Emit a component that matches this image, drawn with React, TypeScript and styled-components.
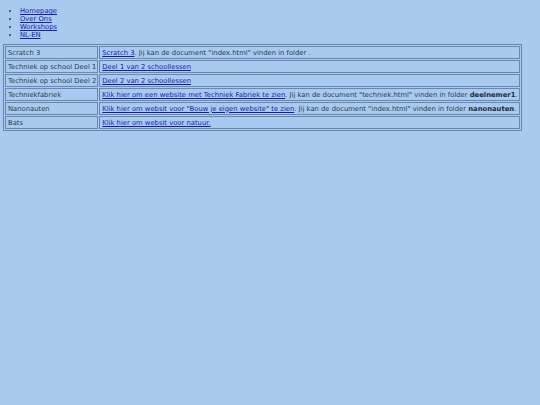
import React from 'react';
import styled, { createGlobalStyle } from 'styled-components';

const GlobalStyle = createGlobalStyle`
  html, body {
    margin: 0;
    background: #a9caf0;
  }
  body {
    padding: 4px 4px 4px 3px;
    font-family: "DejaVu Sans", Verdana, sans-serif;
    font-size: 6.8px;
    color: #2a3a4a;
  }
`;

const Menu = styled.ul`
  margin: 3px 0 5px 0;
  padding-left: 17px;
  list-style: disc;
  li {
    line-height: 8px;
  }
  a {
    color: #1a1aa6;
  }
`;

const Table = styled.table`
  border: 1px solid #6a88ad;
  border-spacing: 1px;
  width: 518px;
`;

const Cell = styled.td<{ $label?: boolean }>`
  border: 1px solid #6a88ad;
  padding: 0 1px 0 2px;
  height: 11px;
  white-space: nowrap;
  width: ${(p) => (p.$label ? '1%' : 'auto')};
  a {
    color: #1a1aa6;
  }
  b {
    color: #1e2a38;
  }
`;

const rows: { label: string; content: React.ReactNode }[] = [
  {
    label: 'Scratch 3',
    content: (
      <>
        <a href="#">Scratch 3</a>. Jij kan de document "index.html" vinden in folder .
      </>
    ),
  },
  { label: 'Techniek op school Deel 1', content: <a href="#">Deel 1 van 2 schoollessen</a> },
  { label: 'Techniek op school Deel 2', content: <a href="#">Deel 2 van 2 schoollessen</a> },
  {
    label: 'Techniekfabriek',
    content: (
      <>
        <a href="#">Klik hier om een website met Techniek Fabriek te zien</a>. Jij kan de document
        "techniek.html" vinden in folder <b>deelnemer1</b>.
      </>
    ),
  },
  {
    label: 'Nanonauten',
    content: (
      <>
        <a href="#">Klik hier om websit voor "Bouw je eigen website" te zien</a>. Jij kan de document
        "index.html" vinden in folder <b>nanonauten</b>.
      </>
    ),
  },
  { label: 'Bats', content: <a href="#">Klik hier om websit voor natuur.</a> },
];

export default function App() {
  return (
    <>
      <GlobalStyle />
      <Menu>
        <li><a href="#">Homepage</a></li>
        <li><a href="#">Over Ons</a></li>
        <li><a href="#">Workshops</a></li>
        <li><a href="#">NL-EN</a></li>
      </Menu>
      <Table>
        <tbody>
          {rows.map((r) => (
            <tr key={r.label}>
              <Cell $label>{r.label}</Cell>
              <Cell>{r.content}</Cell>
            </tr>
          ))}
        </tbody>
      </Table>
    </>
  );
}
